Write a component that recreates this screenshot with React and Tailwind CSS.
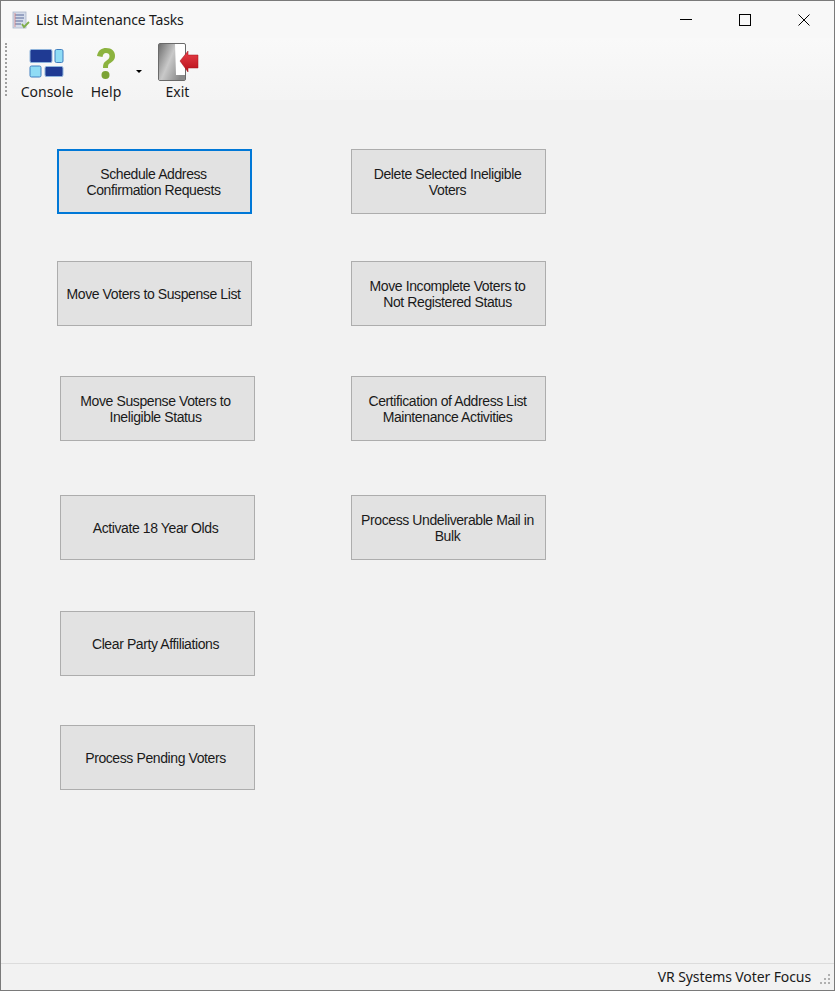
import {useState} from 'react'

function ConsoleIcon() {
  return (
    <svg width="36" height="30" viewBox="0 0 36 30">
      <rect x="1" y="1.500" width="22" height="13" rx="1.500" fill="#1f3a93" stroke="#8fb4dc" />
      <rect x="26" y="1.500" width="8" height="13" rx="1.500" fill="#8fdcf5" stroke="#3f7fc0" />
      <rect x="1" y="18" width="11" height="11" rx="1.500" fill="#8fdcf5" stroke="#3f7fc0" />
      <rect x="16" y="18.500" width="18" height="10" rx="1.500" fill="#1f3a93" stroke="#8fb4dc" />
    </svg>
  )
}

function HelpIcon() {
  return (
    <svg width="22" height="34" viewBox="0 0 22 34">
      <path d="M2 9 C3 3 7 1 11 1 C17 1 20 4.500 20 9 C20 13 17 15 14.500 16.500 C13 17.500 13 19 13 21 L8 21 C8 17.500 8.500 15.500 11 14 C13.500 12.500 14.500 11 14.500 9 C14.500 7 13 6 11 6 C9 6 8 7.500 7.500 10 Z" fill="#8cb33f" />
      <circle cx="10.500" cy="28" r="4" fill="#7ba335" />
    </svg>
  )
}

function ExitIcon() {
  return (
    <svg width="42" height="38" viewBox="0 0 42 38">
      <defs>
        <linearGradient id="door" x1="0" y1="0" x2="1" y2="0.600">
          <stop offset="0" stopColor="#6f6f6f" />
          <stop offset="0.500" stopColor="#c9c9c9" />
          <stop offset="1" stopColor="#8a8a8a" />
        </linearGradient>
        <linearGradient id="arrow" x1="0" y1="0" x2="0" y2="1">
          <stop offset="0" stopColor="#e8404a" />
          <stop offset="1" stopColor="#b80f18" />
        </linearGradient>
      </defs>
      <rect x="0.500" y="0.500" width="27" height="37" rx="1.500" fill="#ffffff" stroke="#6a6a6a" />
      <path d="M1 1 L17 1 L18 32 L27 32 L27 37 L1 37 Z" fill="url(#door)" />
      <path d="M22 18 L30 8 L30 12 L40 12 L40 25 L30 25 L30 29 Z" fill="url(#arrow)" stroke="#a01218" strokeWidth="0.500" />
    </svg>
  )
}

function TaskButton({children, focused, className}) {
  return (
    <button
      className={`w-[195px] h-[65px] shrink-0 flex items-center justify-center pr-[2px] text-center text-[14px] leading-[16px] tracking-[-0.4px] whitespace-nowrap text-[#1a1a1a] bg-[#e2e2e2] ${
        focused ? 'border-2 border-[#0078d7]' : 'border border-[#adadad]'
      } ${className || ''}`}
    >
      <span>{children}</span>
    </button>
  )
}

function App() {
  const [focused] = useState('schedule')
  return (
    <div className="w-[835px] h-[991px] flex flex-col border border-[#7a7a7a] bg-[#f2f2f2] font-['Liberation_Sans',sans-serif] overflow-hidden">
      {/* Title bar */}
      <header className="h-[37px] shrink-0 flex items-center bg-[#f8f8f8]">
        <svg className="ml-[11px]" width="18" height="18" viewBox="0 0 18 18">
          <rect x="1" y="1" width="13" height="16" fill="#d5dcea" stroke="#aab4c8" strokeWidth="0.800" />
          <path d="M3 4h9M3 7h9M3 10h8M3 13h6" stroke="#5a6a9a" strokeWidth="1" />
          <path d="M3 2v14" stroke="#d88080" strokeWidth="0.800" />
          <path d="M10 13l2 3 5-5" stroke="#7fae4a" strokeWidth="1.800" fill="none" />
        </svg>
        <span className="ml-[6px] text-[14px] tracking-[-0.15px] text-[#1a1a1a] font-['Noto_Sans',sans-serif]">List Maintenance Tasks</span>
        <div className="ml-auto mr-[1px] flex items-center">
          <div className="w-[59px] flex justify-center"><div className="w-[12px] h-px bg-black" /></div>
          <div className="w-[59px] flex justify-center"><div className="w-[12px] h-[12px] border border-black" /></div>
          <div className="w-[59px] flex justify-center">
            <svg width="12" height="12" viewBox="0 0 12 12"><path d="M0.500 0.500L11.500 11.500M11.500 0.500L0.500 11.500" stroke="black" /></svg>
          </div>
        </div>
      </header>

      {/* Toolbar */}
      <nav className="h-[62px] shrink-0 flex bg-gradient-to-b from-[#f9f9f9] to-[#f4f4f4] text-[14px] text-[#1a1a1a] font-['Noto_Sans',sans-serif]">
        <div className="ml-[4px] mt-[5px] h-[53px] border-l-2 border-dotted border-[#a0a0a0]" />
        <div className="ml-[13px] w-[54px] flex flex-col items-center">
          <div className="h-[41px] shrink-0 pt-[10px]"><ConsoleIcon /></div>
          <span className="leading-[18px] mt-[4px]">Console</span>
        </div>
        <div className="ml-[10px] w-[44px] flex flex-col items-center">
          <div className="h-[41px] shrink-0 pt-[9px]"><HelpIcon /></div>
          <span className="leading-[18px] mt-[4px]">Help</span>
        </div>
        <div className="mt-[32px] ml-[8px] w-0 h-0 border-x-[3px] border-x-transparent border-t-[3px] border-t-black" />
        <div className="ml-[12px] w-[46px] flex flex-col items-center">
          <div className="h-[41px] shrink-0 pt-[5px] pl-[4px]"><ExitIcon /></div>
          <span className="leading-[18px] mt-[4px] ml-[1px]">Exit</span>
        </div>
      </nav>

      {/* Task buttons */}
      <main className="flex-1 flex items-start">
        <div className="ml-[57px] mt-[49px] flex flex-col items-start">
          <TaskButton focused={focused === 'schedule'} className="-ml-[1px]">Schedule Address<br />Confirmation Requests</TaskButton>
          <TaskButton className="mt-[47px] -ml-[1px]">Move Voters to Suspense List</TaskButton>
          <TaskButton className="mt-[50px] ml-[2px] pr-[4px]!">Move Suspense Voters to<br />Ineligible Status</TaskButton>
          <TaskButton className="mt-[54px] ml-[2px] pr-[4px]!">Activate 18 Year Olds</TaskButton>
          <TaskButton className="mt-[51px] ml-[2px] pr-[4px]!">Clear Party Affiliations</TaskButton>
          <TaskButton className="mt-[49px] ml-[2px] pr-[4px]!">Process Pending Voters</TaskButton>
        </div>
        <div className="ml-[96px] mt-[49px] flex flex-col items-start">
          <TaskButton>Delete Selected Ineligible<br />Voters</TaskButton>
          <TaskButton className="mt-[47px]">Move Incomplete Voters to<br />Not Registered Status</TaskButton>
          <TaskButton className="mt-[50px]">Certification of Address List<br />Maintenance Activities</TaskButton>
          <TaskButton className="mt-[54px]">Process Undeliverable Mail in<br />Bulk</TaskButton>
        </div>
      </main>

      {/* Status bar */}
      <footer className="h-[27px] shrink-0 flex items-center justify-end border-t border-[#dcdcdc] text-[14px] text-[#1a1a1a] font-['Noto_Sans',sans-serif]">
        <span className="tracking-[-0.1px] -mt-[2px]">VR Systems Voter Focus</span>
        <svg className="ml-[9px] mr-[2px] mt-[6px]" width="12" height="12" viewBox="0 0 12 12" fill="#b0b0b0">
          <rect x="8" y="0" width="2" height="2" />
          <rect x="4" y="4" width="2" height="2" />
          <rect x="8" y="4" width="2" height="2" />
          <rect x="0" y="8" width="2" height="2" />
          <rect x="4" y="8" width="2" height="2" />
          <rect x="8" y="8" width="2" height="2" />
        </svg>
      </footer>
    </div>
  )
}

export default App
